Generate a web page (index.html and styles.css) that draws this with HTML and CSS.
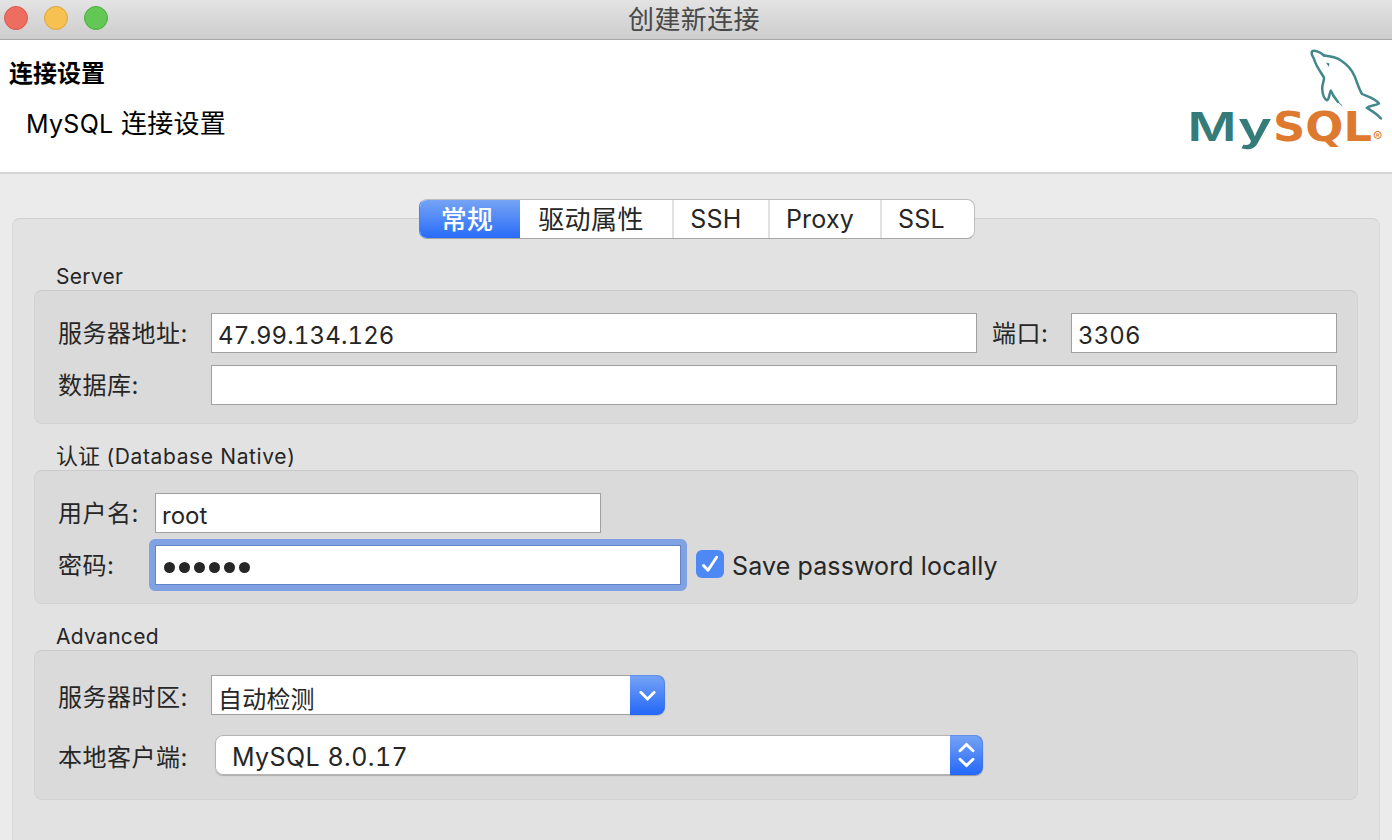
FILE: index.html
```
<!DOCTYPE html>
<html lang="zh-CN">
<head>
<meta charset="utf-8">
<title>创建新连接</title>
<link rel="stylesheet" href="styles.css">
</head>
<body>
<div class="window">
  <header class="titlebar">
    <div class="lights"><span class="light red"></span><span class="light yellow"></span><span class="light green"></span></div>
    <span class="window-title">创建新连接</span>
  </header>
  <section class="banner">
    <div class="banner-text">
      <h1 class="heading">连接设置</h1>
      <p class="subheading"><span class="latin-26">MySQL</span> 连接设置</p>
    </div>
    <svg class="logo" width="202" height="112" viewBox="1184 44 202 112" role="img" aria-label="MySQL">
      <g fill="none" stroke="#43878a" stroke-width="2.5" stroke-linejoin="round" stroke-linecap="round">
        <path d="M1324 55.500 C1320 52 1314 49.500 1312 51.500 C1310.500 54 1313 56.500 1314 59 C1316 66 1320 71 1324 77.500 C1324.300 81 1322 84 1322.200 89 C1322.500 94 1323.500 98.500 1327 100.300 C1329.500 99.500 1329 94 1330.800 90.500 C1332.500 95 1335 98.500 1338 102"/>
        <path d="M1324 55.500 C1330 56 1336 57 1341 60.500 C1347 64.500 1352 70 1354.500 76 C1357 82 1359 89 1362 94 C1367 96.500 1374 97.500 1379 103.500 C1374.500 106 1369.500 105 1366.800 107.800 C1371 110.500 1376.500 113.500 1381 118.500"/>
        <path d="M1338 102 L1342 105.500" stroke-width="1"/>
      </g>
      <path d="M1326 62.500 l3.500 1 -.8 3.300z" fill="#3b8080"/>
      <text class="wordmark my teal" x="1187.500" y="140.500" textLength="49" lengthAdjust="spacingAndGlyphs">M</text>
      <text class="wordmark my teal" x="1238" y="140.500" textLength="34" lengthAdjust="spacingAndGlyphs">y</text>
      <text class="wordmark orange" x="1273" y="140.500" textLength="99" lengthAdjust="spacingAndGlyphs">SQL</text>
      <text class="registered" x="1373" y="141.500">®</text>
    </svg>
  </section>
  <main class="content">
    <div class="panel">
      <nav class="tabs">
        <span class="tab active t1">常规</span><span class="tab t2">驱动属性</span><span class="tab t3">SSH</span><span class="tab t4">Proxy</span><span class="tab t5">SSL</span>
      </nav>
      <section class="group">
        <h2 class="group-title first">Server</h2>
        <div class="box server">
          <div class="row">
            <label class="label wide">服务器地址:</label><div class="field host"><span class="num">47.99.134.126</span></div>
            <label class="label port-label">端口:</label><div class="field port"><span class="num">3306</span></div>
          </div>
          <div class="row">
            <label class="label wide">数据库:</label><div class="field database"></div>
          </div>
        </div>
      </section>
      <section class="group">
        <h2 class="group-title native"><span class="cjk-22">认证</span> (Database Native)</h2>
        <div class="box auth">
          <div class="row">
            <label class="label">用户名:</label><div class="field user"><span class="txt">root</span></div>
          </div>
          <div class="row">
            <label class="label">密码:</label><div class="field password">
              <span class="dots"><i></i><i></i><i></i><i></i><i></i><i></i></span>
            </div>
            <span class="checkbox"><svg width="28" height="28" viewBox="0 0 28 28"><path d="M7.500 15.500 L12 20.300 L20.600 7.300" fill="none" stroke="#fff" stroke-width="2.900" stroke-linecap="round" stroke-linejoin="round"/></svg></span>
            <span class="check-label">Save password locally</span>
          </div>
        </div>
      </section>
      <section class="group">
        <h2 class="group-title">Advanced</h2>
        <div class="box advanced">
          <div class="row">
            <label class="label wide">服务器时区:</label><div class="combo">
              <div class="field zone"><span>自动检测</span></div>
              <span class="stepper combo-button"><svg width="35" height="40" viewBox="0 0 35 40"><path d="M10.800 17.300 L17.500 24 L24.200 17.300" fill="none" stroke="#fff" stroke-width="2.900" stroke-linecap="round" stroke-linejoin="miter"/></svg></span>
            </div>
          </div>
          <div class="row">
            <label class="label wide">本地客户端:</label><div class="select">
              <span class="select-text">MySQL <span class="version">8.0.17</span></span>
              <span class="stepper"><svg width="33" height="40" viewBox="0 0 33 40"><path d="M10 15.700 L16.500 9.500 L23 15.700 M10 24.300 L16.500 30.500 L23 24.300" fill="none" stroke="#fff" stroke-width="2.900" stroke-linecap="round" stroke-linejoin="miter"/></svg></span>
            </div>
          </div>
        </div>
      </section>
    </div>
  </main>
</div>
</body>
</html>
```
FILE: styles.css
```
* { box-sizing: border-box; }
body {
  margin: 0;
  font-family: Inter, "Noto Sans CJK SC", sans-serif;
  color: #262626;
}
.window {
  width: 1392px;
  height: 840px;
  overflow: hidden;
  display: flex;
  flex-direction: column;
  background: #ebebeb;
}
h1, h2, p { margin: 0; font-weight: 400; }

.titlebar {
  flex: none;
  height: 40px;
  display: grid;
  grid-template-columns: 1fr auto 1fr;
  background: linear-gradient(#e3e3e3, #cdcdcd);
  border-bottom: 1px solid #a6a6a6;
}
.lights { display: flex; gap: 16px; padding: 6px 0 0 4px; }
.light { width: 24px; height: 24px; border-radius: 50%; border: 1px solid; }
.red { background: #ee6d61; border-color: #d8594f; }
.yellow { background: #f6c151; border-color: #dda53c; }
.green { background: #62c755; border-color: #4cad3d; }
.window-title { font-size: 26px; line-height: 39px; letter-spacing: .4px; color: #484848; padding-right: 4px; }

.banner {
  flex: none;
  height: 134px;
  background: #fff;
  border-bottom: 2px solid #d5d5d5;
  display: flex;
  justify-content: space-between;
  color: #000;
}
.banner-text { padding: 16px 0 0 9px; }
.heading { font-size: 24px; font-weight: 600; line-height: 36px; }
.subheading { font-size: 26px; line-height: 37px; padding: 13px 0 0 17px; letter-spacing: .2px; }
.latin-26 { font-size: 25px; letter-spacing: .3px; }
.logo { margin: 4px 6px 0 0; flex: none; }
.wordmark { font-family: "DejaVu Sans", sans-serif; font-weight: 700; font-size: 40px; }
.my { font-family: Inter, sans-serif; font-weight: 600; }
.teal { fill: #347b7a; }
.orange { fill: #dd7a2f; }
.registered { font-family: Inter, sans-serif; font-size: 14px; fill: #dd7a2f; }

.content { flex: 1; padding: 44px 12px 0; }
.panel {
  height: 700px;
  padding: 0 21px;
  background: #e2e2e2;
  border: 1px solid #d9d9d9;
  border-top-color: #cfcfcf;
  border-radius: 8px;
}
.tabs {
  display: flex;
  width: 556px;
  height: 40px;
  margin: -20px auto 0 385px;
  position: relative;
  background: #fff;
  border-radius: 8px;
  overflow: hidden;
  border: 1px solid #bdbdbd;
  border-left-color: #4b82e6;
  border-bottom-color: #a5a5a5;
}
.tab {
  height: 40px;
  line-height: 39px;
  font-size: 25px;
  letter-spacing: .2px;
  text-align: center;
  border-left: 2px solid #e2e2e2;
}
.tab.active {
  background: linear-gradient(#76a4f5, #2468f8);
  color: #fff;
  font-weight: 500;
  line-height: 39px;
}
.t1 { width: 100px; font-size: 26px; padding-right: 6px; }
.t2 { width: 152px; font-size: 26px; padding-right: 10px; letter-spacing: .4px; }
.tab.t1, .tab.t2 { border-left: 0; }
.t3 { width: 96px; padding-right: 10px; }
.t4 { width: 112px; padding-right: 10px; }
.t5 { width: 94px; padding-right: 13px; }

.group-title {
  height: 46px;
  padding: 17px 0 0 22px;
  font-size: 21px;
  line-height: 31px;
  letter-spacing: .3px;
}
.group-title.first { height: 51px; padding-top: 23px; line-height: 30px; }
.native { letter-spacing: .62px; line-height: 30px; }
.cjk-22 { font-size: 22px; letter-spacing: 0; }
.box {
  background: #dadada;
  border: 1px solid #d3d3d3;
  border-top-color: #cacaca;
  border-radius: 8px;
  padding: 22px 20px 0 23px;
  display: flex;
  flex-direction: column;
  gap: 12px;
}
.server, .auth { height: 134px; }
.advanced { height: 150px; padding-top: 24px; gap: 20px; }
.row { display: flex; height: 40px; }
.label { width: 97px; font-size: 24px; line-height: 42px; letter-spacing: .5px; white-space: nowrap; }
.label.wide { width: 153px; }
.advanced .label { line-height: 46px; }
.field {
  height: 40px;
  background: #fff;
  border: 1px solid #a0a0a0;
  padding: 4px 0 0 6px;
  font-size: 24px;
  line-height: 36px;
}
.host { width: 766px; }
.port-label { width: 79px; margin-left: 15px; }
.port { width: 266px; }
.database { width: 1126px; }
.user { width: 446px; }
/* The focus ring sits outside the field: an outer frame pulled back by its own width. */
.password {
  width: 538px;
  height: 52px;
  margin: -6px;
  padding: 0;
  border: 6px solid #80a1e2;
  border-radius: 6px;
  box-shadow: inset 0 0 0 1px #6284cb;
}
.num { font-variant-numeric: tabular-nums; letter-spacing: .12px; }
.dots { display: flex; gap: 4px; padding: 17px 0 0 9px; }
.dots i { width: 11px; height: 11px; border-radius: 50%; background: #262626; }
.checkbox {
  width: 28px;
  height: 28px;
  margin: 5px 8px 0 21px;
  border-radius: 6px;
  background: #4d88f5;
}
.password + .checkbox { margin-left: 15px; }
.checkbox svg { display: block; }
.check-label { font-size: 25px; line-height: 42px; letter-spacing: .12px; }
.combo { display: flex; }
.zone { width: 419px; border-right: 0; padding-top: 6px; letter-spacing: .2px; }
.stepper {
  height: 40px;
  background: linear-gradient(#76a4f5, #2468f8);
  border-radius: 0 8px 8px 0;
  box-shadow: inset -1px 1px 0 rgba(60, 110, 215, .35), 0 1px 1px rgba(0, 0, 0, .15);
}
.stepper svg { display: block; }
.select {
  width: 768px;
  height: 40px;
  margin-left: 4px;
  background: #fff;
  border-radius: 8px;
  box-shadow: inset 0 0 0 1px #b3b3b3, 0 1px 1px rgba(0, 0, 0, .2);
  display: flex;
  justify-content: space-between;
  padding-left: 17px;
}
.select-text { font-size: 25px; line-height: 45px; letter-spacing: .4px; }
.version { font-variant-numeric: tabular-nums; }
```
